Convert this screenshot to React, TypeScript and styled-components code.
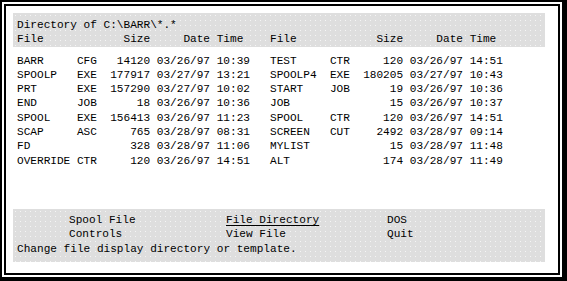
import { FC, ReactElement } from "react";
import styled, { createGlobalStyle } from "styled-components";

/*
    ====================================================== [Styles]======================================================
*/

const GlobalStyle = createGlobalStyle`
  html, body {
    margin: 0;
    padding: 0;
    background: #ffffff;
  }
`;

const Frame = styled.div`
  box-sizing: border-box;
  width: 567px;
  height: 281px;
  border: 2px solid #000;
  border-right-width: 5px;
  border-bottom-width: 4px;
  padding: 2px;
  display: flex;
  font-family: "Liberation Mono", "DejaVu Sans Mono", monospace;
  font-size: 11.1px;
  line-height: 14.3px;
  color: #000;
`;

const Screen = styled.div`
  box-sizing: border-box;
  flex: 1;
  border: 2px solid #000;
  padding: 7px 13px 11px 7px;
  display: flex;
  flex-direction: column;
`;

const Panel = styled.div<{ $pad: string }>`
  background-color: #dedede;
  background-image: radial-gradient(
    circle,
    rgba(255, 255, 255, 0.7) 0.6px,
    transparent 0.9px
  );
  background-size: 5px 5px;
  padding: ${(p) => p.$pad};
  white-space: pre;
`;

const Listing = styled.div`
  margin-top: 7px;
  padding-left: 4px;
  white-space: pre;
`;

const Row = styled.div`
  display: grid;
  grid-template-columns: 35ch 35ch;
  column-gap: 3ch;
`;

const Half = styled.div`
  display: grid;
  grid-template-columns: 9ch 3ch 8ch 9ch 6ch;
`;

const Cell = styled.span<{ $right?: boolean }>`
  text-align: ${(p) => (p.$right ? "right" : "left")};
`;

const Spacer = styled.div`
  flex: 1;
`;

const Menu = styled.div`
  display: grid;
  grid-template-columns: 157px 161px 1fr;
  padding-left: 52px;
`;

const MenuItem = styled.span<{ $active?: boolean }>`
  text-decoration: ${(p) => (p.$active ? "underline" : "none")};
  text-underline-offset: 2px;
`;

/*
    ====================================================== [Data]======================================================
*/

interface IFileEntry {
  name: string;
  ext: string;
  size: string;
  date: string;
  time: string;
}

const FILES: Array<[IFileEntry, IFileEntry]> = [
  [
    { name: "BARR", ext: "CFG", size: "14120", date: "03/26/97", time: "10:39" },
    { name: "TEST", ext: "CTR", size: "120", date: "03/26/97", time: "14:51" },
  ],
  [
    { name: "SPOOLP", ext: "EXE", size: "177917", date: "03/27/97", time: "13:21" },
    { name: "SPOOLP4", ext: "EXE", size: "180205", date: "03/27/97", time: "10:43" },
  ],
  [
    { name: "PRT", ext: "EXE", size: "157290", date: "03/27/97", time: "10:02" },
    { name: "START", ext: "JOB", size: "19", date: "03/26/97", time: "10:36" },
  ],
  [
    { name: "END", ext: "JOB", size: "18", date: "03/26/97", time: "10:36" },
    { name: "JOB", ext: "", size: "15", date: "03/26/97", time: "10:37" },
  ],
  [
    { name: "SPOOL", ext: "EXE", size: "156413", date: "03/26/97", time: "11:23" },
    { name: "SPOOL", ext: "CTR", size: "120", date: "03/26/97", time: "14:51" },
  ],
  [
    { name: "SCAP", ext: "ASC", size: "765", date: "03/28/97", time: "08:31" },
    { name: "SCREEN", ext: "CUT", size: "2492", date: "03/28/97", time: "09:14" },
  ],
  [
    { name: "FD", ext: "", size: "328", date: "03/28/97", time: "11:06" },
    { name: "MYLIST", ext: "", size: "15", date: "03/28/97", time: "11:48" },
  ],
  [
    { name: "OVERRIDE", ext: "CTR", size: "120", date: "03/26/97", time: "14:51" },
    { name: "ALT", ext: "", size: "174", date: "03/28/97", time: "11:49" },
  ],
];

/*
    ====================================================== [Components]======================================================
*/

const HeaderHalf: FC = (): ReactElement => (
  <Half>
    <Cell>File</Cell>
    <Cell />
    <Cell $right>Size</Cell>
    <Cell $right>Date</Cell>
    <Cell $right>Time </Cell>
  </Half>
);

const EntryHalf: FC<{ entry: IFileEntry }> = ({ entry }): ReactElement => (
  <Half>
    <Cell>{entry.name}</Cell>
    <Cell>{entry.ext}</Cell>
    <Cell $right>{entry.size}</Cell>
    <Cell $right>{entry.date}</Cell>
    <Cell $right>{entry.time}</Cell>
  </Half>
);

export default function App(): ReactElement {
  return (
    <>
      <GlobalStyle />
      <Frame>
        <Screen>
          <Panel $pad="5px 4px 0">
            <div>Directory of C:\BARR\*.*</div>
            <Row>
              <HeaderHalf />
              <HeaderHalf />
            </Row>
          </Panel>

          <Listing>
            {FILES.map(([left, right], index) => (
              <Row key={index}>
                <EntryHalf entry={left} />
                <EntryHalf entry={right} />
              </Row>
            ))}
          </Listing>

          <Spacer />

          <Panel $pad="4px 4px 6px">
            <Menu>
              <MenuItem>Spool File</MenuItem>
              <MenuItem $active>File Directory</MenuItem>
              <MenuItem>DOS</MenuItem>
              <MenuItem>Controls</MenuItem>
              <MenuItem>View File</MenuItem>
              <MenuItem>Quit</MenuItem>
            </Menu>
            <div>Change file display directory or template.</div>
          </Panel>
        </Screen>
      </Frame>
    </>
  );
}
